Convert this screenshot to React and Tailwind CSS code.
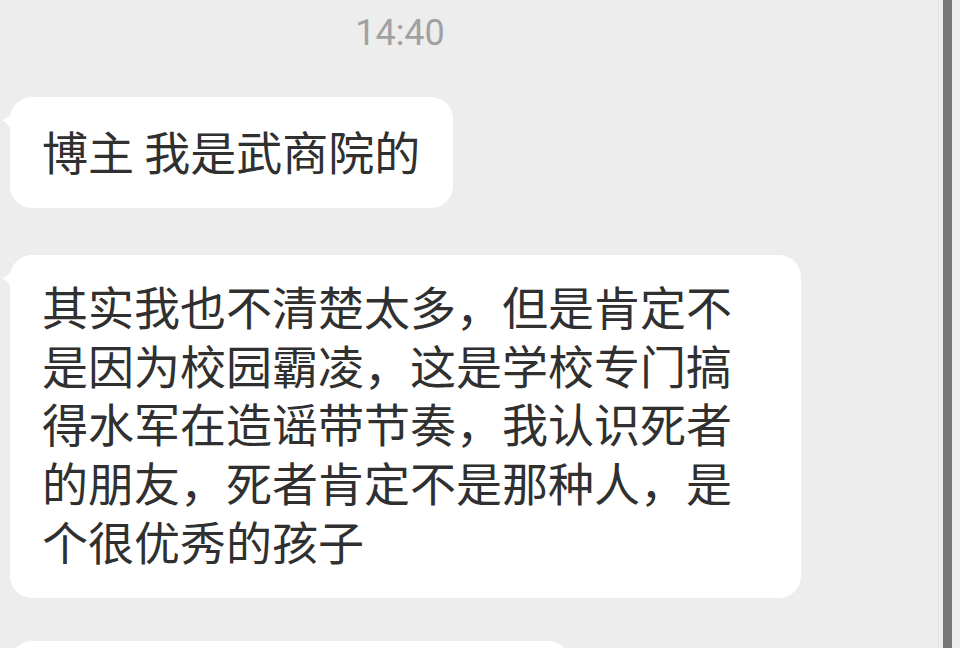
import React from 'react';

const cjk = { fontFamily: '"Noto Sans CJK SC", "Noto Sans", sans-serif' };

function Tail() {
    return (
        <svg className="absolute left-[-9px] top-[14px]" width="12" height="22" viewBox="0 0 12 22">
            <path d="M12 0 C9 5 5 8 1 9 C5 11 9 15 12 22 Z" fill="#ffffff" />
        </svg>
    );
}

function Bubble({ children, className }) {
    return (
        <div className={`relative shrink-0 ml-[10px] bg-white rounded-[22px] text-[#303030] text-[46px] leading-[58.7px] ${className}`} style={cjk}>
            <Tail />
            {children}
        </div>
    );
}

export default function App() {
    return (
        <div className="w-[960px] h-[648px] overflow-hidden bg-[#ededed] flex">
            {/* chat column */}
            <div className="w-[938px] flex flex-col">
                <div className="w-[800px] flex justify-center pt-[13px]">
                    <span className="text-[36px] leading-[40px] text-[#a1a1a1]" style={{ fontFamily: 'Roboto, "Noto Sans", sans-serif' }}>14:40</span>
                </div>

                <Bubble className="mt-[44px] w-[443px] h-[111px] pl-[32px] pt-[24px]">
                    博主 我是武商院的
                </Bubble>

                <Bubble className="mt-[47px] w-[791px] h-[343px] pl-[32px] pt-[21px]">
                    其实我也不清楚太多，但是肯定不<br />
                    是因为校园霸凌，这是学校专门搞<br />
                    得水军在造谣带节奏，我认识死者<br />
                    的朋友，死者肯定不是那种人，是<br />
                    个很优秀的孩子
                </Bubble>

                <Bubble className="mt-[43px] w-[560px] h-[100px]" />
            </div>

            {/* scrollbar */}
            <div className="w-px h-full bg-[#e3e3e3]" />
            <div className="w-[4px]" />
            <div className="w-[9px] h-full bg-[#777777]" />
        </div>
    );
}
